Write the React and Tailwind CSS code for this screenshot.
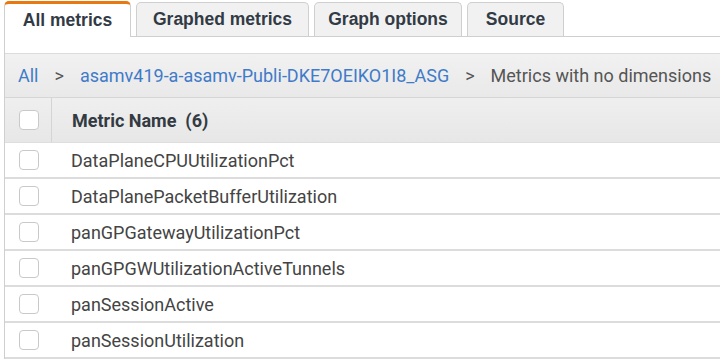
const tabs = ["All metrics", "Graphed metrics", "Graph options", "Source"];

const metrics = [
  "DataPlaneCPUUtilizationPct",
  "DataPlanePacketBufferUtilization",
  "panGPGatewayUtilizationPct",
  "panGPGWUtilizationActiveTunnels",
  "panSessionActive",
  "panSessionUtilization",
];

function Checkbox() {
  return <div className="w-[20px] h-[20px] rounded-[4px] border border-[#c9c9c9] bg-white" />;
}

export default function App() {
  return (
    <div className="w-[720px] h-[360px] overflow-hidden bg-white pl-[4px] font-['Roboto',sans-serif]">
      {/* tab strip */}
      <div className="flex items-end gap-[5px] h-[37px] border-b border-[#cfcfcf]">
        {tabs.map((t, i) =>
          i === 0 ? (
            <div
              key={t}
              className="h-[36px] -mb-px w-[127px] flex items-center justify-center rounded-t-[5px] border-x border-[#cfcfcf] border-t-[3px] border-t-[#e8780f] bg-white font-['Liberation_Sans',Arial,sans-serif] font-bold text-[17.5px] text-[#323b45]"
            >
              {t}
            </div>
          ) : (
            <div
              key={t}
              className={`h-[34px] flex items-center justify-center rounded-t-[5px] border border-b-0 border-[#cfcfcf] bg-[#f1f1f1] font-['Liberation_Sans',Arial,sans-serif] font-bold text-[17.5px] text-[#323b45] ${
                i === 1 ? "w-[173px]" : i === 2 ? "w-[148px]" : "w-[97px]"
              }`}
            >
              {t}
            </div>
          )
        )}
      </div>

      <div className="border-l border-[#cfcfcf]">
        <div className="h-[17px] border-b border-[#dcdcdc]" />

        {/* breadcrumb */}
        <div className="h-[44px] flex items-center pl-[13px] bg-gradient-to-b from-[#f1f1f1] to-[#e9e9e9] border-b border-[#d6d6d6] text-[18px] whitespace-nowrap">
          <span className="text-[#3f7bc8]">All</span>
          <span className="text-[#555] mx-[16px]">&gt;</span>
          <span className="text-[#3f7bc8]">asamv419-a-asamv-Publi-DKE7OEIKO1I8_ASG</span>
          <span className="text-[#555] mx-[16px]">&gt;</span>
          <span className="text-[#555]">Metrics with no dimensions</span>
        </div>

        {/* header */}
        <div className="h-[45px] flex bg-gradient-to-b from-[#efefef] to-[#e7e7e7] border-b border-[#dedede]">
          <div className="w-[47px] flex items-center justify-center border-r border-[#d4d4d4] pl-[1px]">
            <Checkbox />
          </div>
          <div className="flex items-center pl-[20px] font-bold text-[18px] text-[#333a42]">
            Metric Name&nbsp;&nbsp;(6)
          </div>
        </div>

        {/* rows */}
        {metrics.map((m) => (
          <div key={m} className="h-[36px] flex items-center border-b-2 border-[#dcdcdc]">
            <div className="w-[47px] flex items-center justify-center">
              <Checkbox />
            </div>
            <div className="pl-[19px] text-[18px] text-[#444]">{m}</div>
          </div>
        ))}
      </div>
    </div>
  );
}
